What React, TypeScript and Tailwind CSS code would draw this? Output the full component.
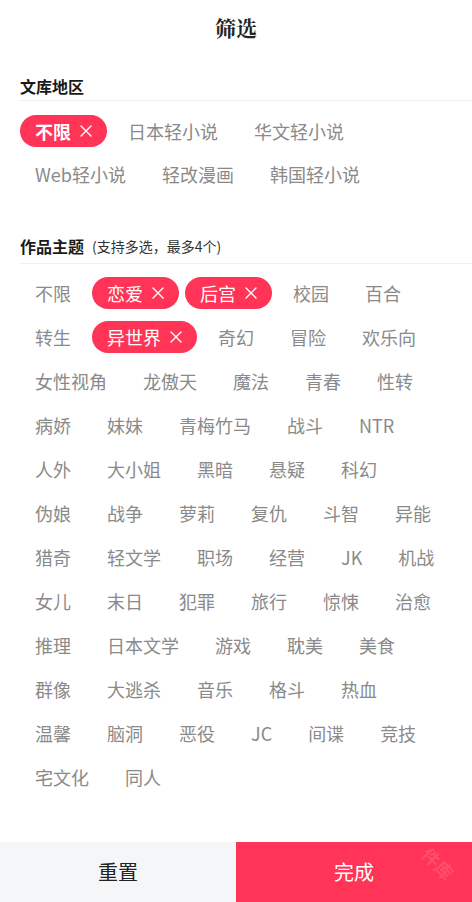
import { useState } from 'react'

const regions = ['不限', '日本轻小说', '华文轻小说', 'Web轻小说', '轻改漫画', '韩国轻小说']

const themes = [
  '不限', '恋爱', '后宫', '校园', '百合',
  '转生', '异世界', '奇幻', '冒险', '欢乐向',
  '女性视角', '龙傲天', '魔法', '青春', '性转',
  '病娇', '妹妹', '青梅竹马', '战斗', 'NTR',
  '人外', '大小姐', '黑暗', '悬疑', '科幻',
  '伪娘', '战争', '萝莉', '复仇', '斗智', '异能',
  '猎奇', '轻文学', '职场', '经营', 'JK', '机战',
  '女儿', '末日', '犯罪', '旅行', '惊悚', '治愈',
  '推理', '日本文学', '游戏', '耽美', '美食',
  '群像', '大逃杀', '音乐', '格斗', '热血',
  '温馨', '脑洞', '恶役', 'JC', '间谍', '竞技',
  '宅文化', '同人',
]

function Chip({ label, active, bold, onClick }: { label: string; active: boolean; bold?: boolean; onClick: () => void }) {
  if (active) {
    return (
      <button
        onClick={onClick}
        className={`h-8 flex items-center pl-[15px] pr-[15px] rounded-full bg-[#ff3456] text-white text-[18px] leading-none ${bold ? 'font-bold' : ''}`}
      >
        {label}
        <svg width="12" height="12" viewBox="0 0 12 12" className="ml-[9px]" aria-hidden="true">
          <path d="M1 1L11 11M11 1L1 11" stroke="currentColor" strokeWidth="1.4" strokeLinecap="round" />
        </svg>
      </button>
    )
  }
  return (
    <button onClick={onClick} className="h-8 flex items-center px-[15px] rounded-full text-[#8a8a8a] text-[18px] leading-none">
      {label}
    </button>
  )
}

export default function App() {
  const [region, setRegion] = useState('不限')
  const [picked, setPicked] = useState<string[]>(['恋爱', '后宫', '异世界'])

  const toggle = (t: string) => {
    if (t === '不限') return setPicked([])
    setPicked((p) => (p.includes(t) ? p.filter((x) => x !== t) : p.length >= 4 ? p : [...p, t]))
  }

  return (
    <div className="h-screen flex flex-col bg-white font-['Noto_Sans_CJK_SC','Noto_Sans',sans-serif]">
      {/* header */}
      <div className="h-14 shrink-0 flex items-center justify-center">
        <h1 className="text-[21px] font-bold text-[#222] font-['Noto_Serif_CJK_SC','Noto_Sans_CJK_SC',serif]">筛选</h1>
      </div>

      <div className="flex-1 overflow-hidden">
        {/* 文库地区 */}
        <section className="pl-5 pt-5">
          <div className="border-b border-[#efefef] pb-1">
            <h2 className="text-[16px] leading-5 font-bold text-[#1a1a1a]">文库地区</h2>
          </div>
          <div className="flex flex-wrap gap-x-[6px] gap-y-[11px] mt-[14px] pr-3">
            {regions.map((r) => (
              <Chip key={r} label={r} bold active={region === r} onClick={() => setRegion(r)} />
            ))}
          </div>
        </section>

        {/* 作品主题 */}
        <section className="pl-5 mt-[46px]">
          <div className="border-b border-[#efefef] pb-[7px] flex items-end gap-2">
            <h2 className="text-[16px] leading-5 font-bold text-[#1a1a1a]">作品主题</h2>
            <span className="text-[14px] leading-5 text-[#333]">(支持多选，最多4个)</span>
          </div>
          <div className="flex flex-wrap gap-x-[6px] gap-y-3 mt-[13px] pr-3">
            {themes.map((t) => (
              <Chip
                key={t}
                label={t}
                active={t === '不限' ? picked.length === 0 : picked.includes(t)}
                onClick={() => toggle(t)}
              />
            ))}
          </div>
        </section>
      </div>

      {/* footer */}
      <div className="h-[60px] shrink-0 grid grid-cols-2 relative overflow-hidden">
        <button onClick={() => { setRegion('不限'); setPicked([]) }} className="bg-[#f5f6f8] text-[20px] text-[#222]">
          重置
        </button>
        <button className="bg-[#ff3456] text-[20px] text-white">完成</button>
        <span className="absolute right-[16px] top-[8px] rotate-45 text-[18px] font-bold text-white/15 pointer-events-none">件库</span>
      </div>
    </div>
  )
}
